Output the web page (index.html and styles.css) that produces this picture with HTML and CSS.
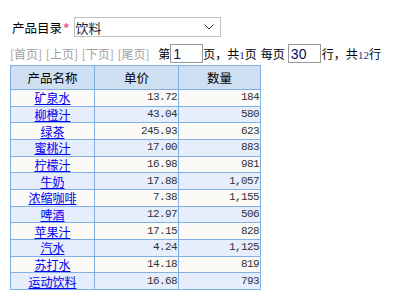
FILE: index.html
```html
<!DOCTYPE html>
<html lang="zh-CN">
<head>
    <meta charset="UTF-8">
    <title>产品目录</title>
    <link rel="stylesheet" href="styles.css">
</head>
<body>
    <div class="filter-row">
        <label class="filter-label">产品目录<span class="required">*</span></label>
        <div class="select-box">
            <span class="select-value">饮料</span>
            <svg class="chevron" width="10" height="6" viewBox="0 0 10 6"><path d="M0.5 0.5 L5 5 L9.5 0.5" fill="none" stroke="#333" stroke-width="1"/></svg>
        </div>
    </div>

    <div class="pager">
        <span class="pager-link">[首页]</span>
        <span class="pager-link">[上页]</span>
        <span class="pager-link">[下页]</span>
        <span class="pager-link last">[尾页]</span>
        第<input class="pager-input" type="text" value="1">页，共<span class="num">1</span>页<span class="gap"></span>每页<input class="pager-input size" type="text" value="30">行，共<span class="num">12</span>行
    </div>

    <table class="product-table">
        <thead>
            <tr><th>产品名称</th><th>单价</th><th>数量</th></tr>
        </thead>
        <tbody>
            <tr><td class="name"><a href="#">矿泉水</a></td><td class="num-cell">13.72</td><td class="num-cell">184</td></tr>
            <tr><td class="name"><a href="#">柳橙汁</a></td><td class="num-cell">43.04</td><td class="num-cell">580</td></tr>
            <tr><td class="name"><a href="#">绿茶</a></td><td class="num-cell">245.93</td><td class="num-cell">623</td></tr>
            <tr><td class="name"><a href="#">蜜桃汁</a></td><td class="num-cell">17.00</td><td class="num-cell">883</td></tr>
            <tr><td class="name"><a href="#">柠檬汁</a></td><td class="num-cell">16.98</td><td class="num-cell">981</td></tr>
            <tr><td class="name"><a href="#">牛奶</a></td><td class="num-cell">17.88</td><td class="num-cell">1,057</td></tr>
            <tr><td class="name"><a href="#">浓缩咖啡</a></td><td class="num-cell">7.38</td><td class="num-cell">1,155</td></tr>
            <tr><td class="name"><a href="#">啤酒</a></td><td class="num-cell">12.97</td><td class="num-cell">506</td></tr>
            <tr><td class="name"><a href="#">苹果汁</a></td><td class="num-cell">17.15</td><td class="num-cell">828</td></tr>
            <tr><td class="name"><a href="#">汽水</a></td><td class="num-cell">4.24</td><td class="num-cell">1,125</td></tr>
            <tr><td class="name"><a href="#">苏打水</a></td><td class="num-cell">14.18</td><td class="num-cell">819</td></tr>
            <tr><td class="name"><a href="#">运动饮料</a></td><td class="num-cell">16.68</td><td class="num-cell">793</td></tr>
        </tbody>
    </table>
</body>
</html>
```

FILE: styles.css
```css
body {
    margin: 0;
    padding: 17px 0 0 10px;
    font-family: "Noto Sans CJK SC", "Noto Sans", sans-serif;
    font-size: 12px;
    color: #000;
}
.filter-row {
    display: flex;
    align-items: center;
    height: 20px;
    padding-left: 2px;
}
.filter-label {
    font-size: 12.5px;
}
.required {
    color: #f0508c;
    font-size: 13px;
    font-weight: bold;
    margin: 0 4px 0 1px;
}
.select-box {
    display: flex;
    align-items: center;
    justify-content: space-between;
    box-sizing: border-box;
    width: 147px;
    height: 20px;
    border: 1px solid #c2c2c2;
    background: #fff;
    padding: 0 6px 0 1px;
}
.select-value {
    font-size: 13px;
    color: #1a1a2e;
}
.pager {
    height: 19px;
    line-height: 19px;
    margin-top: 7px;
    white-space: nowrap;
}
.pager-link {
    color: #a0a0a0;
    margin-right: 1px;
}
.pager-link.last {
    margin-right: 6px;
}
.gap {
    display: inline-block;
    width: 4px;
}
.pager-input {
    box-sizing: border-box;
    width: 33px;
    height: 19px;
    border: 1px solid #999;
    padding: 0 2px;
    margin: 0;
    vertical-align: top;
    font-family: "Liberation Sans", sans-serif;
    font-size: 14px;
    color: #001060;
}
.pager-input.size {
    margin: 0 1px 0 3px;
}
.num {
    font-family: "Liberation Serif", serif;
    font-size: 11px;
    color: #1a2a80;
}
.product-table {
    border-collapse: collapse;
    margin-top: 2px;
    table-layout: fixed;
    width: 251px;
}
.product-table th,
.product-table td {
    border: 1px solid #80b0e2;
    padding: 0;
}
.product-table th {
    background: #cfdff2;
    font-weight: normal;
    font-size: 12.5px;
    height: 23px;
}
.product-table th:nth-child(1),
.product-table th:nth-child(2) {
    width: 83px;
}
.product-table td {
    height: 15.67px;
    line-height: 15px;
    background: #fbfaf6;
}
.product-table tbody tr:nth-child(even) td {
    background: #e6edfd;
}
.name {
    text-align: center;
}
.name a {
    color: #0000ee;
}
.num-cell {
    text-align: right;
    font-family: "Liberation Mono", monospace;
    font-size: 11px;
    letter-spacing: -0.6px;
    color: #333;
    padding-right: 1px !important;
}
```
